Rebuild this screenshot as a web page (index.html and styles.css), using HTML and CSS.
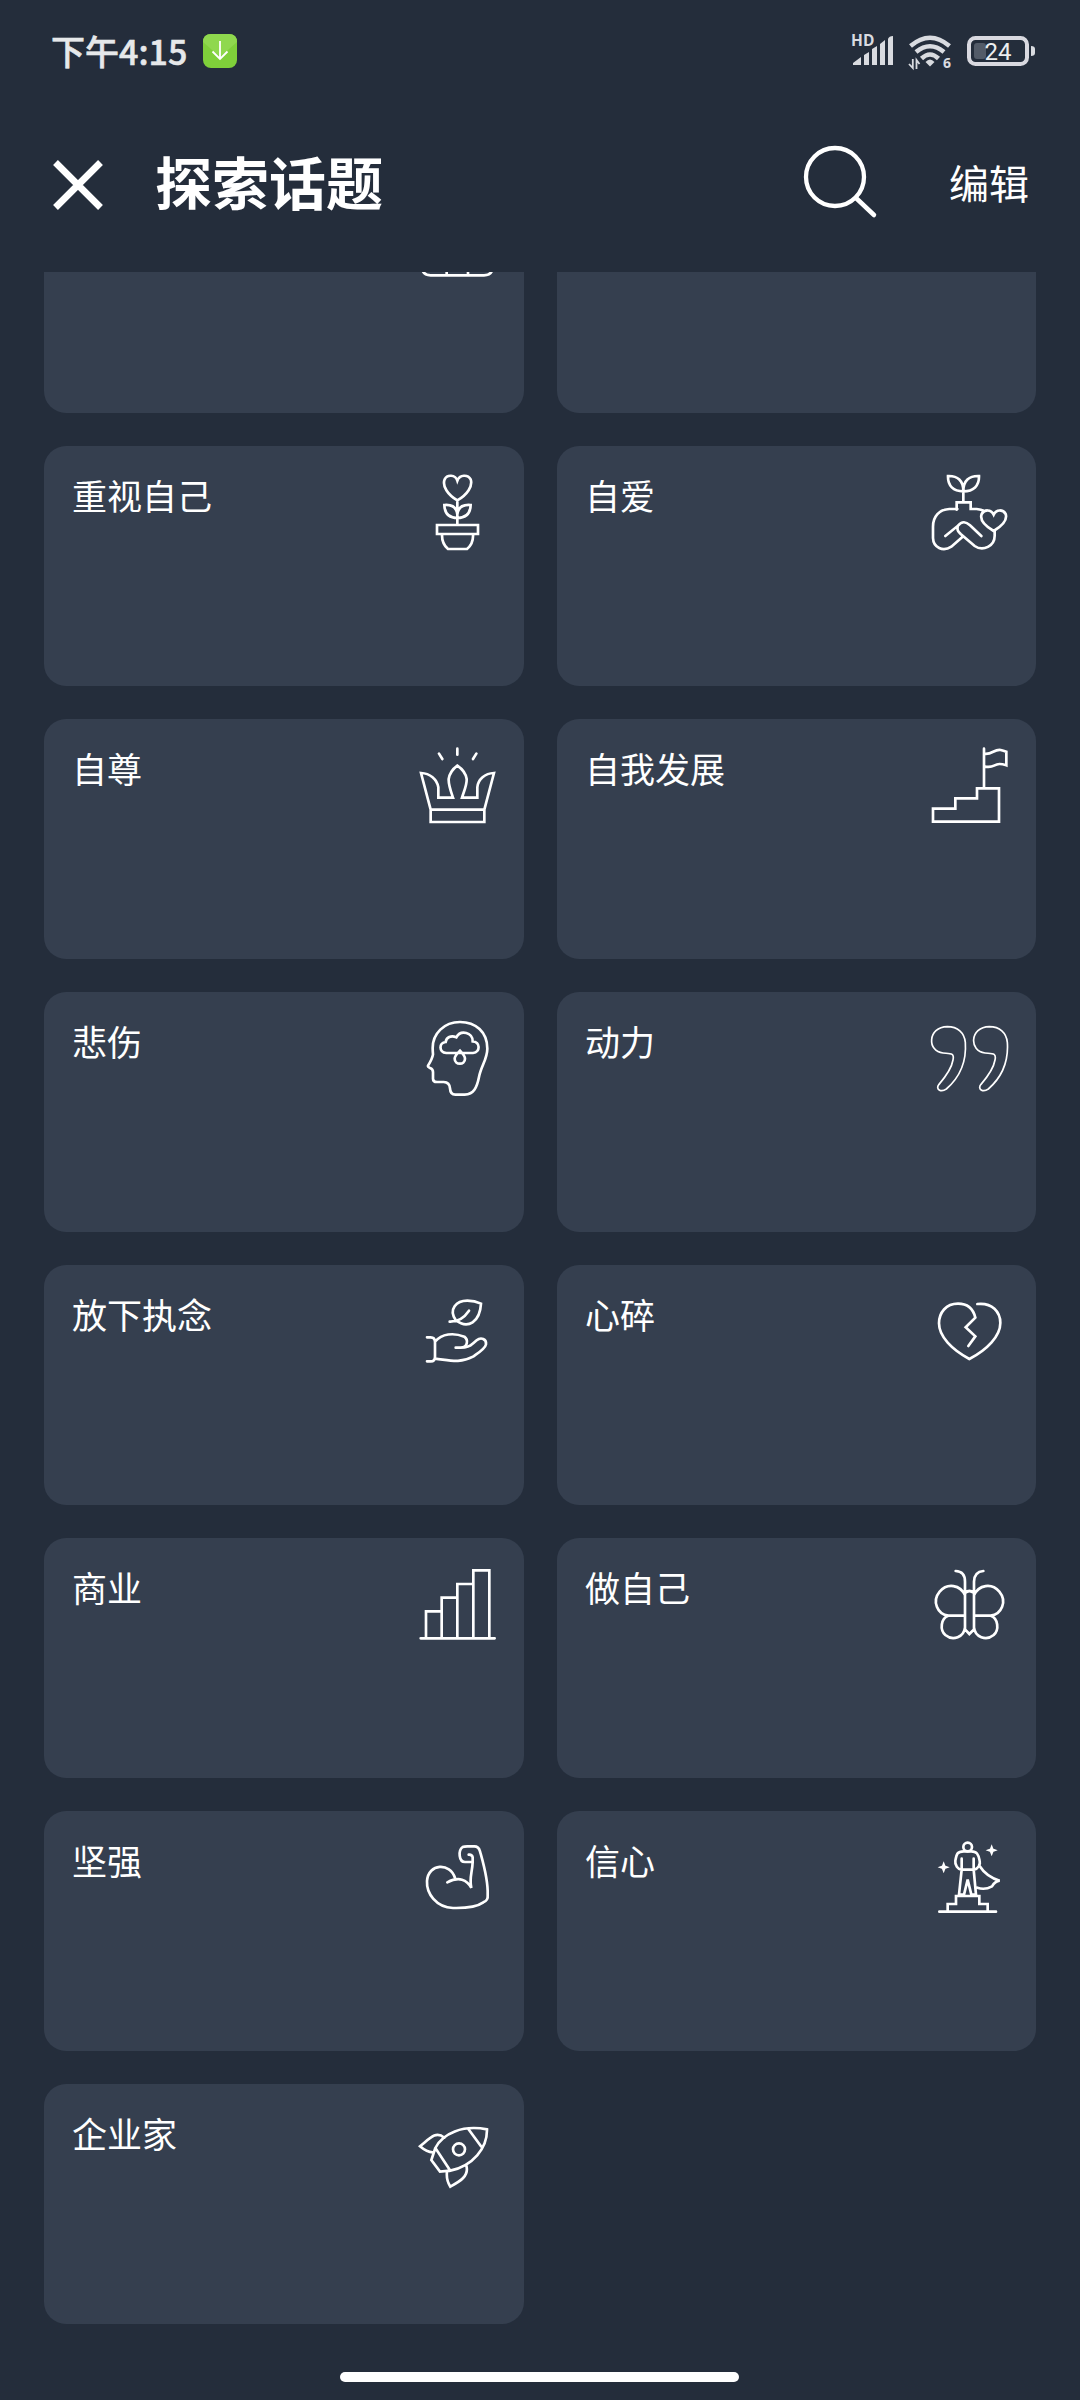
FILE: index.html
```html
<!DOCTYPE html>
<html lang="zh-CN">
<head>
<meta charset="utf-8">
<title>探索话题</title>
<link rel="stylesheet" href="styles.css">
</head>
<body>
<div class="screen">
  <div class="status">
    <span class="time">下午4:15</span>
    <svg class="download" width="34" height="34" viewBox="0 0 34 34"><rect width="34" height="34" rx="8" fill="#7fd03a"/><path d="M0 8Q0 0 8 0H26Q34 0 34 8L17 23Z" fill="#8fd84e"/><path d="M17 7V25M9.5 17.5L17 25L24.500 17.500" fill="none" stroke="#fff" stroke-width="1.800"/></svg>
    <svg class="signals" width="190" height="44" viewBox="0 1 190 44">
      <g fill="#d9dbe0">
        <text class="hd" x="1" y="18" textLength="23.500">HD</text>
        <path d="M3 37V35L11 29V37ZM14 37V27L19 24V37ZM22 37V21L27 18V37ZM30 37V16L35 12V37ZM38 37V11Q39 8 43 8V37Z"/>
        <path d="M75.500 34Q80 29 84.500 34L80 38.500Z"/>
        <text class="wifi-gen" x="93" y="40">6</text>
      </g>
      <path d="M59 36L62.800 40V31M66.500 41V32L69.500 36" fill="none" stroke="#d9dbe0" stroke-width="1.800"/>
      <path d="M60.500 18Q80 1.500 99.500 18M66 24Q80 12.500 94 24M71.500 30.500Q80 22.500 88.500 30.500" fill="none" stroke="#d9dbe0" stroke-width="4.500"/>
      <rect x="119" y="10" width="58" height="26" rx="6.500" fill="none" stroke="#d9d9e0" stroke-width="4"/>
      <rect x="124" y="15" width="12" height="16" rx="3" fill="#535b68"/>
      <path d="M181 18Q185 18 185 21V25Q185 28 181 28Z" fill="#d9dbe0"/>
      <text class="charge" x="134.500" y="32" textLength="27" fill="#eceef0">24</text>
    </svg>
  </div>
  <header class="header">
    <svg class="close" width="52" height="52" viewBox="0 0 52 52"><path d="M3.500 3.500L48.500 48.500M48.500 3.500L3.500 48.500" stroke="#fff" stroke-width="6.800"/></svg>
    <h1>探索话题</h1>
    <svg class="search" width="76" height="76" viewBox="0 0 76 76"><circle cx="33" cy="33" r="29" fill="none" stroke="#fff" stroke-width="4.300"/><path d="M54 54L72 71" stroke="#fff" stroke-width="4.500" stroke-linecap="round"/></svg>
    <span class="edit">编辑</span>
  </header>
  <main class="topics">
    <div class="card"><span></span>
      <svg class="icon" viewBox="0 0 240 240"><path d="M12 110V203Q14 226 38 226H198Q222 226 224 203V110M86 195V226M150 195V226"/></svg></div>
    <div class="card"></div>

    <div class="card"><span>重视自己</span>
      <svg class="icon" viewBox="54 69 240 240"><path d="M172 92C166 73 141 73 134 88C126 108 143 134 172 151C202 134 219 108 212 88C204 73 179 73 172 92ZM172 151V223M172 194C170 173 158 163 133 165C134 190 147 204 172 204C198 204 211 190 212 165C187 163 174 173 172 194M111 225H234V252H111ZM126 252Q125 281 144 297H201Q221 280 219 252"/></svg></div>
    <div class="card"><span>自爱</span>
      <svg class="icon" viewBox="90 69 240 240"><path d="M190 154V123C190 92 173 77 144 78C143 108 160 124 190 124C220 124 238 108 237 78C207 77 190 92 190 123M172 177H148C118 178 99 200 99 230V264C100 293 129 306 154 290L188 260M170 179V157H212V177H230Q244 178 254 184M136 258L174 227C186 212 198 215 210 226L244 258M174 227C170 240 174 244 182 252L224 288C250 306 284 287 284 257V240M281 194C273 177 253 178 245 192C238 211 252 226 281 243C310 226 323 211 317 192C309 178 289 177 281 194Z"/></svg></div>

    <div class="card"><span>自尊</span>
      <svg class="icon" viewBox="54 888 240 240"><path d="M172 896V914M117 911L127 927M229 911L219 927M92 1079L63 969C90 970 111 988 115 1012V1043H159C151 1020 145 1004 146 987Q150 963 172 947Q196 963 200 987C201 1004 193 1020 186 1043H232V1012C234 988 255 970 282 969L253 1079ZM92 1079V1116H253V1079"/></svg></div>
    <div class="card"><span>自我发展</span>
      <svg class="icon" viewBox="90 888 240 240"><path d="M252 896V1012M252 911C276 915 282 897 302 900Q310 902 319 905V946C300 940 294 941 282 947Q270 953 252 949M99 1115V1076H166V1045H231V1015H297V1115Z"/></svg></div>

    <div class="card"><span>悲伤</span>
      <svg class="icon" viewBox="54 57 240 240"><path d="M99 163Q97 176 84 197Q83 201 90 204Q99 207 99 216V236Q99 246 111 246H131Q149 247 150 265Q151 284 166 284H194C222 283 231 261 237 231C243 199 262 177 262 146C262 96 227 66 180 66C132 66 98 101 98 144Q98 153 99 163ZM139 159H219C242 157 241 125 218 124C219 97 182 88 169 112C153 105 139 112 137 126C116 128 116 157 139 159ZM180 152Q164 168 164 176C164 196 195 196 195 176Q195 168 180 152Z"/></svg></div>
    <div class="card"><span>动力</span>
      <svg class="icon quote" viewBox="90 57 240 240"><path d="M142 80C82 81 81 155 129 159C151 161 164 158 159 180C155 205 135 232 117 253C105 268 123 278 139 267C180 231 200 184 196 127C193 98 173 80 142 80Z"/><path transform="translate(126)" d="M142 80C82 81 81 155 129 159C151 161 164 158 159 180C155 205 135 232 117 253C105 268 123 278 139 267C180 231 200 184 196 127C193 98 173 80 142 80Z"/></svg></div>

    <div class="card"><span>放下执念</span>
      <svg class="icon" viewBox="54 876 240 240"><path d="M149 965Q184 966 207 932M167 960C145 927 169 902 202 902Q224 902 243 911C240 965 204 990 167 960M81 1012H92Q105 1012 105 1026V1070Q105 1084 92 1084H81M105 1025C126 1001 160 997 193 1010C206 1020 203 1043 182 1043H167M182 1043Q207 1043 218 1031L230 1021C243 1010 260 1017 258 1033C256 1046 233 1060 219 1070C180 1091 150 1081 105 1076"/></svg></div>
    <div class="card"><span>心碎</span>
      <svg class="icon" viewBox="90 876 240 240"><path d="M205 1038L226 1009L197 982L226 953C219 924 200 911 174 911C138 911 117 938 117 970C117 1010 156 1049 208 1077C262 1049 301 1008 301 969C301 936 277 907 232 912"/></svg></div>

    <div class="card"><span>商业</span>
      <svg class="icon" viewBox="54 75 240 240"><path d="M62 295H284M78 295V214H125M125 295V173H172M172 295V132H220M220 295V91H268V295"/></svg></div>
    <div class="card"><span>做自己</span>
      <svg class="icon" viewBox="90 75 240 240"><path d="M167 93Q195 94 195 125V268L208 282L222 268V125Q223 95 250 93M195 159Q208 147 222 159M195 166C181 134 142 128 119 155C95 184 112 223 145 227H195M222 166C236 134 275 128 298 155C322 184 305 223 272 227H222M145 227C122 235 119 270 136 285C159 304 192 291 195 262M272 227C295 235 298 270 281 285C258 304 225 291 222 262"/></svg></div>

    <div class="card"><span>坚强</span>
      <svg class="icon" viewBox="54 894 240 240"><path d="M206 944Q216 943 218 952V966H195C176 966 174 931 188 921Q192 919 202 919H223Q236 919 240 934C250 970 265 1019 263 1065Q265 1081 250 1087C229 1102 201 1105 159 1104C108 1102 79 1060 81 1023C85 969 151 967 165 1014M218 966C217 997 207 1014 214 1044C201 1018 176 1009 142 1027"/></svg></div>
    <div class="card"><span>信心</span>
      <svg class="icon" viewBox="90 894 240 240"><circle cx="203" cy="921" r="13"/><path d="M191 934C172 934 170 941 166 962C164 976 174 987 184 989H222C234 987 242 974 239 962C235 942 230 934 214 934ZM185 956V989L177 1064H192L203 1019L214 1064H228L221 989V956M237 976C252 999 272 1015 299 1022Q285 1024 276 1039Q254 1051 232 1043M118 1115H288M143 1115V1092H168V1068H238V1092H263V1115"/><path class="solid" d="M131 971L134 979L142 982L134 985L131 993L128 985L120 982L128 979ZM275 920L278 928L286 931L278 934L275 942L272 934L264 931L272 928Z"/></svg></div>

    <div class="card"><span>企业家</span>
      <svg class="icon" viewBox="54 33 240 240"><circle cx="177" cy="148" r="18"/><path d="M106 144C128 100 188 74 261 88C262 145 218 198 151 212ZM205 87L243 139M106 144L94 180L120 215L151 212M133 113C108 92 90 114 60 139Q82 158 100 157M141 215Q138 240 151 260C180 244 208 228 199 197"/></svg></div>
  </main>
  <div class="home"></div>
</div>
</body>
</html>
```
FILE: styles.css
```css
* { box-sizing: border-box; }
body { margin: 0; background: #242d3b; }
.screen {
  width: 1080px;
  height: 2400px;
  display: flex;
  flex-direction: column;
  overflow: hidden;
  background: #242d3b;
  color: #fff;
  font-family: "Noto Sans CJK SC", sans-serif;
}
.status {
  height: 102px;
  flex: none;
  display: flex;
  align-items: center;
  padding: 0 40px 0 51px;
}
.time {
  font-size: 34px;
  font-weight: 500;
  line-height: 44px;
  color: #e6e8ea;
  -webkit-text-stroke: 0.6px #e6e8ea;
  white-space: nowrap;
}
.download { margin-left: 16px; }
.signals { margin-left: auto; }
.hd { font: 700 15.5px "Open Sans", sans-serif; }
.wifi-gen { font: 700 14px "Open Sans", sans-serif; }
.charge { font: 400 24px Roboto, sans-serif; }
.header {
  height: 170px;
  flex: none;
  display: flex;
  align-items: flex-start;
  padding: 42px 51px 0;
}
.close { margin: 15px 0 0 1px; }
h1 {
  margin: -4px auto 0 51px;
  font-size: 57px;
  font-weight: 700;
  line-height: 80px;
}
.search { margin-right: 1px; }
.edit {
  margin: 8px 0 0 70px;
  font-size: 40px;
  line-height: 60px;
}
.topics {
  height: 2052px;
  flex: none;
  display: grid;
  grid-template-columns: 480px 479px;
  grid-auto-rows: 240px;
  gap: 33px;
  align-content: end;
  padding-left: 44px;
  overflow: hidden;
}
.card {
  display: flex;
  justify-content: space-between;
  padding: 27px 26px 0 28px;
  border-radius: 22px;
  background: #353f4f;
  font-size: 35px;
  line-height: 43px;
}
.icon {
  width: 80px;
  height: 80px;
  fill: none;
  stroke: #fff;
  stroke-width: 8;
  stroke-linecap: round;
}
.icon .solid { fill: #fff; stroke-width: 5; }
.quote { stroke-width: 5; }
.home {
  width: 399px;
  height: 10px;
  margin: 48px 0 0 340px;
  border-radius: 5px;
  background: #fff;
}
```
